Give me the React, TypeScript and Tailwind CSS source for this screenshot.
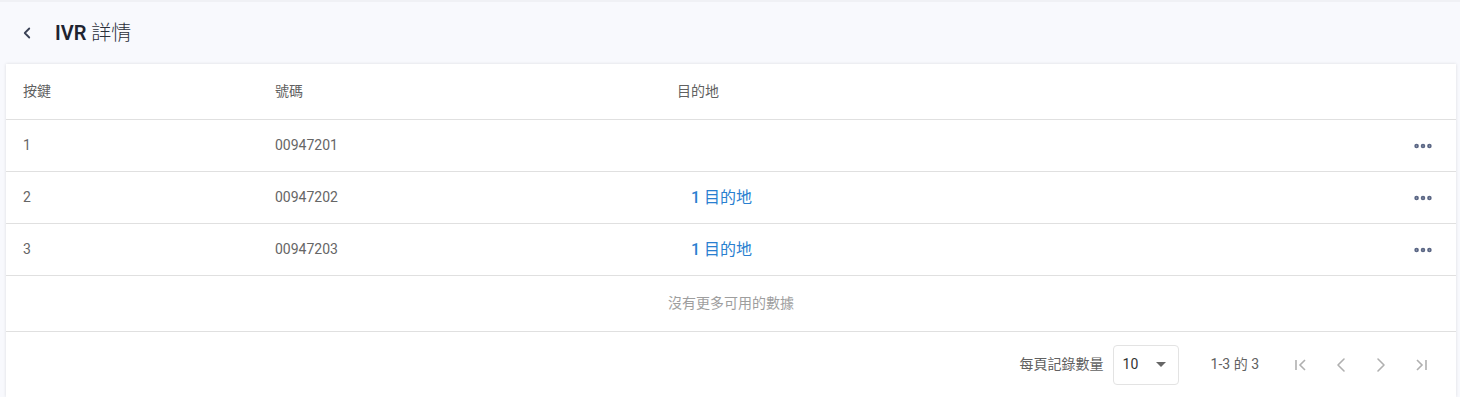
import { ChevronLeft, ChevronRight, MoreHorizontal } from 'lucide-react'

const rows = [
  { key: '1', number: '00947201', dest: '' },
  { key: '2', number: '00947202', dest: '1 目的地' },
  { key: '3', number: '00947203', dest: '1 目的地' },
]

const font = { fontFamily: 'Roboto, "Noto Sans CJK TC", sans-serif' }

function FirstPage() {
  return (
    <svg width="24" height="24" viewBox="0 0 24 24" fill="none" stroke="currentColor" strokeWidth="1.6">
      <path d="M7 7v10" />
      <path d="M16 7l-5 5 5 5" />
    </svg>
  )
}

function LastPage() {
  return (
    <svg width="24" height="24" viewBox="0 0 24 24" fill="none" stroke="currentColor" strokeWidth="1.6">
      <path d="M17 7v10" />
      <path d="M8 7l5 5-5 5" />
    </svg>
  )
}

export default function App() {
  return (
    <div className="h-[397px] w-[1460px] overflow-hidden bg-[#f8f9fd] border-t-2 border-[#f0f1f5] pl-[6px] pr-[4px]" style={font}>
      <div className="flex h-[62px] items-center pl-[12px]">
        <ChevronLeft className="h-[18px] w-[18px] text-[#3a4256]" strokeWidth={2.4} />
        <h1 className="ml-[19px] text-[20px] font-light text-[#2a2f3a]">
          <span className="font-semibold text-[#1f2430]">IVR</span> 詳情
        </h1>
      </div>
      <div className="bg-white shadow-[0_0_3px_rgba(0,0,0,0.12)]">
        <div className="flex h-[56px] items-center border-b border-[#e0e0e0] text-[14px] text-[#616161]">
          <div className="w-[252px] pl-[17px]">按鍵</div>
          <div className="w-[402px] pl-[17px]">號碼</div>
          <div className="pl-[17px]">目的地</div>
        </div>
        {rows.map((row) => (
          <div key={row.key} className="flex h-[52px] items-center border-b border-[#e0e0e0] text-[14px] text-[#666]">
            <div className="w-[252px] pl-[17px]">{row.key}</div>
            <div className="w-[402px] pl-[17px]">{row.number}</div>
            <div className="flex-1 pl-[31px] text-[16px] text-[#2a7fd0]">
              {row.dest && (
                <>
                  <span className="font-medium">1</span> 目的地
                </>
              )}
            </div>
            <MoreHorizontal className="mr-[22px] h-[22px] w-[22px] text-[#5b6785]" strokeWidth={3} />
          </div>
        ))}
        <div className="flex h-[56px] items-center justify-center border-b border-[#e0e0e0] text-[14px] text-[#9e9e9e]">
          沒有更多可用的數據
        </div>
        <div className="flex h-[65px] items-center justify-end pr-[23px] text-[14px] text-[#616161]">
          <span className="mr-[9px]">每頁記錄數量</span>
          <div className="flex h-[40px] w-[66px] items-center justify-between rounded border border-[#e3e3e3] pl-[9px] pr-[12px] text-[#333]">
            <span>10</span>
            <svg width="10" height="5" viewBox="0 0 10 5">
              <path d="M0 0h10L5 5z" fill="#666" />
            </svg>
          </div>
          <span className="ml-[32px] mr-[30px]">1-3 的 3</span>
          <div className="flex items-center gap-[16px] text-[#b0b0b0]">
            <FirstPage />
            <ChevronLeft className="h-[24px] w-[24px]" strokeWidth={1.6} />
            <ChevronRight className="h-[24px] w-[24px]" strokeWidth={1.6} />
            <LastPage />
          </div>
        </div>
      </div>
    </div>
  )
}
